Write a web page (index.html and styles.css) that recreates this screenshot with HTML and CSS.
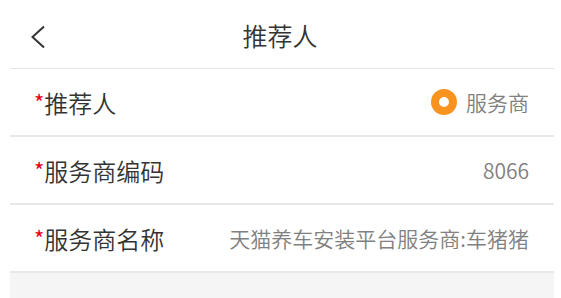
FILE: index.html
```html
<!DOCTYPE html>
<html lang="zh-CN">
<head>
<meta charset="utf-8">
<link rel="stylesheet" href="styles.css">
</head>
<body>
<div class="page">
  <div class="header">
    <svg class="back" width="16" height="24" viewBox="0 0 16 24"><path d="M14 1.5 L2.5 12 L14 22.5" fill="none" stroke="#333" stroke-width="2"/></svg>
    <div class="title">推荐人</div>
  </div>
  <div class="row">
    <div class="label"><span class="req">*</span>推荐人</div>
    <div class="value"><span class="radio"></span>服务商</div>
  </div>
  <div class="row">
    <div class="label"><span class="req">*</span>服务商编码</div>
    <div class="value">8066</div>
  </div>
  <div class="row">
    <div class="label"><span class="req">*</span>服务商名称</div>
    <div class="value">天猫养车安装平台服务商:车猪猪</div>
  </div>
  <div class="footer"></div>
</div>
</body>
</html>
```
FILE: styles.css
```css
html, body {
  margin: 0;
  padding: 0;
  background: #fff;
  font-family: "Noto Sans CJK SC", "Noto Sans", sans-serif;
  font-weight: 350;
}
.page {
  margin-left: 10px;
  width: 544px;
}
.header {
  height: 68px;
  border-bottom: 1px solid #e6e6e6;
  display: flex;
  align-items: center;
  justify-content: center;
  position: relative;
}
.back {
  position: absolute;
  left: 20px;
  top: 25px;
}
.title {
  font-size: 25px;
  color: #333;
  line-height: 1;
  margin-right: 4px;
  margin-top: 2px;
}
.row {
  height: 66px;
  border-bottom: 2px solid #e8e8e8;
  display: flex;
  align-items: center;
  justify-content: space-between;
  padding: 0 25px 0 24px;
}
.label {
  font-size: 24px;
  color: #333;
  display: flex;
  align-items: center;
}
.req {
  color: #e60012;
  font-size: 22px;
  font-weight: 400;
  position: relative;
  top: -1px;
}
.value {
  font-size: 21px;
  color: #808080;
  display: flex;
  align-items: center;
}
.radio {
  width: 10px;
  height: 10px;
  border: 8px solid #f7931e;
  border-radius: 50%;
  margin-right: 9px;
  background: #fff;
}
.footer {
  height: 30px;
  background: #f5f5f5;
}
```
